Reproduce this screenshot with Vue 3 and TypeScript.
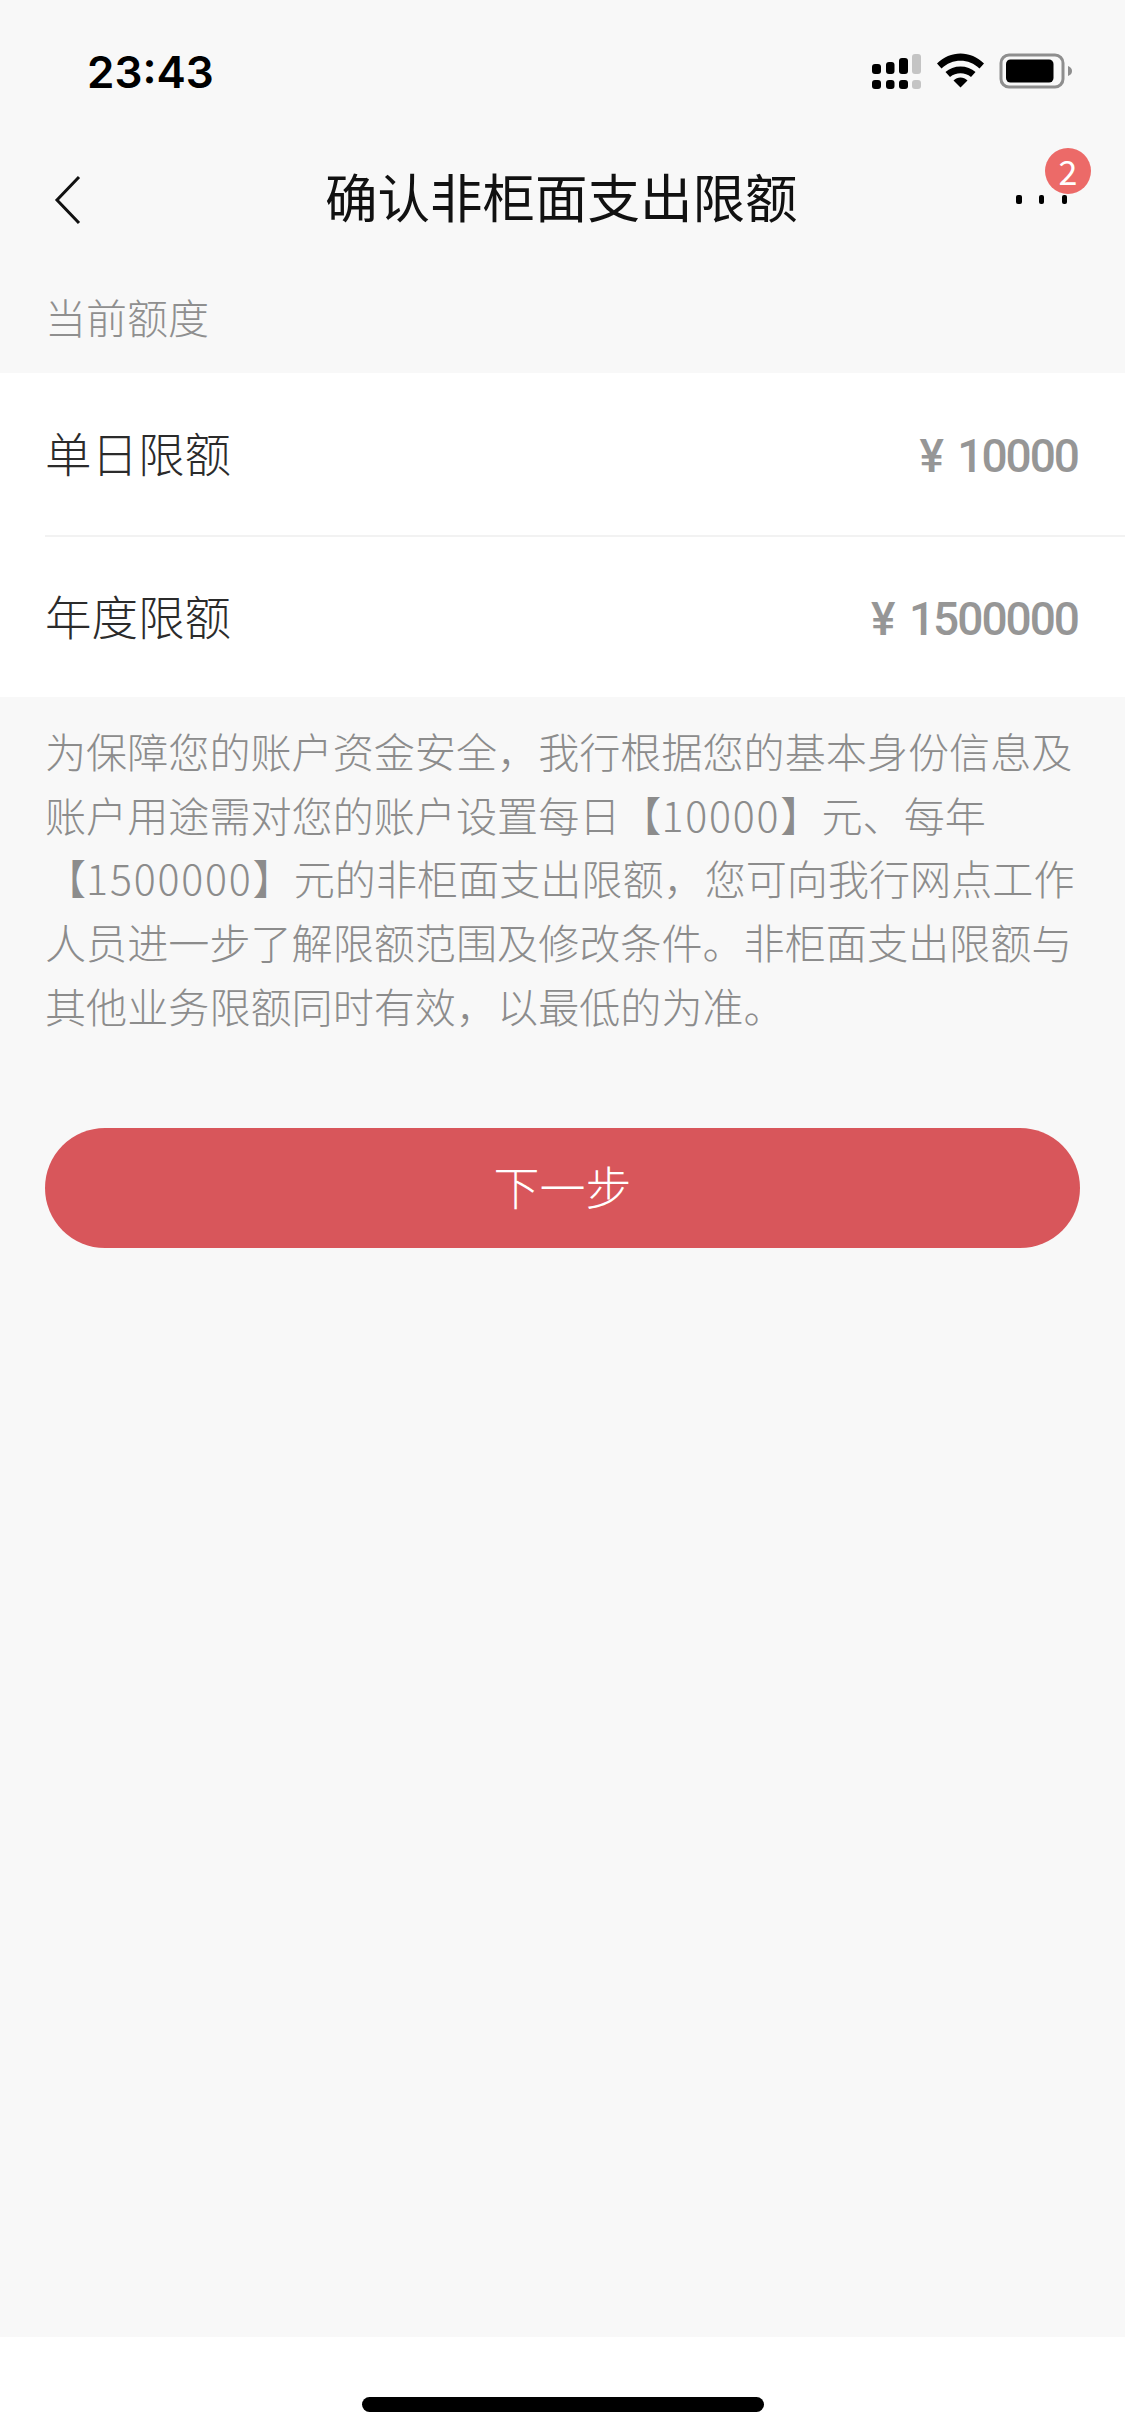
<script setup lang="ts">
interface LimitRow {
  label: string
  amount: string
}

interface NoticePart {
  text: string
  numeric: boolean
}

const rows: LimitRow[] = [
  { label: '单日限额', amount: '¥ 10000' },
  { label: '年度限额', amount: '¥ 1500000' },
]

const plain = (text: string): NoticePart => ({ text, numeric: false })
const digits = (text: string): NoticePart => ({ text, numeric: true })

const noticeLines: NoticePart[][] = [
  [plain('为保障您的账户资金安全，我行根据您的基本身份信息及')],
  [plain('账户用途需对您的账户设置每日【'), digits('10000'), plain('】元、每年')],
  [plain('【'), digits('1500000'), plain('】元的非柜面支出限额，您可向我行网点工作')],
  [plain('人员进一步了解限额范围及修改条件。非柜面支出限额与')],
  [plain('其他业务限额同时有效，以最低的为准。')],
]
</script>

<template>
  <div class="page">
    <main class="main">
      <header class="status">
        <span class="time">23:43</span>
        <svg class="status-icons" width="202" height="36" viewBox="870 53 202 36">
          <g fill="#000">
            <rect x="872" y="64" width="9" height="10" rx="3" />
            <rect x="886" y="62" width="8.500" height="12" rx="3" />
            <rect x="899" y="58" width="9" height="16" rx="3" />
            <rect x="872" y="80" width="9" height="9" rx="3" />
            <rect x="886" y="80" width="8.500" height="9" rx="3" />
            <rect x="899" y="80" width="9" height="9" rx="3" />
          </g>
          <g fill="#c4c4c4">
            <rect x="912" y="54" width="9" height="20" rx="3" />
            <rect x="912" y="80" width="9" height="9" rx="3" />
          </g>
          <path d="M937 63.500 C950 50 971 50 984 63.500 L979.500 68.500 C969 58 952 58 941.500 68.500 Z" fill="#000" />
          <path d="M945.500 72 C953 64.500 968 64.500 975.500 72 L971 77 C965 72 956 72 950 77 Z" fill="#000" />
          <path d="M953.500 80.500 C957.500 76.500 963.500 76.500 967.500 80.500 L960.500 87.500 Z" fill="#000" />
          <rect x="1001" y="55" width="62" height="32" rx="8" fill="none" stroke="#8e8e8e" stroke-width="3" />
          <rect x="1006" y="59.500" width="47.500" height="23" rx="4.500" fill="#000" />
          <path d="M1068 66 C1071 67 1072 69 1072 71 C1072 73 1071 75 1068 76 Z" fill="#8e8e8e" />
        </svg>
      </header>

      <nav class="nav">
        <svg class="back" width="28" height="50" viewBox="0 0 28 50">
          <path d="M25 2 L3 25 L25 48" fill="none" stroke="#111" stroke-width="3" />
        </svg>
        <h1 class="title">确认非柜面支出限额</h1>
        <div class="more">
          <i class="dot"></i><i class="dot"></i><i class="dot"></i>
          <span class="badge">2</span>
        </div>
      </nav>

      <div class="section-label">当前额度</div>

      <section class="card">
        <div v-for="row in rows" :key="row.label" class="row">
          <span class="row-label">{{ row.label }}</span>
          <span class="row-amount">{{ row.amount }}</span>
        </div>
      </section>

      <div class="notice">
        <p v-for="(line, i) in noticeLines" :key="i" class="notice-line">
          <span v-for="part in line" :key="part.text" :class="{ num: part.numeric }">{{ part.text }}</span>
        </p>
      </div>

      <button class="next" type="button">下一步</button>
    </main>

    <footer class="home">
      <span class="home-bar"></span>
    </footer>
  </div>
</template>

<style>
html,
body {
  margin: 0;
  background: #ffffff;
}
</style>

<style scoped>
.page {
  width: 1125px;
  height: 2435px;
  display: flex;
  flex-direction: column;
  background: #ffffff;
  font-family: 'Noto Sans CJK SC', 'Noto Sans', sans-serif;
  font-weight: 300;
  overflow: hidden;
}

.main {
  flex: 1;
  display: flex;
  flex-direction: column;
  background: #f8f8f8;
}

.status {
  height: 132px;
  box-sizing: border-box;
  padding: 53px 53px 0 87px;
  display: flex;
  justify-content: space-between;
  align-items: flex-start;
}

.time {
  font-family: Inter, 'Liberation Sans', sans-serif;
  font-size: 44px;
  font-weight: 600;
  line-height: 38px;
  color: #000;
}

.status-icons {
  display: block;
}

.nav {
  height: 132px;
  box-sizing: border-box;
  padding: 0 58px 0 54px;
  display: flex;
  align-items: center;
  justify-content: space-between;
  position: relative;
}

.back {
  display: block;
  margin-top: 3px;
}

.title {
  margin: 0;
  font-size: 52.500px;
  font-weight: 400;
  line-height: 70px;
  color: #111;
  position: absolute;
  left: 325px;
  top: 28px;
}

.more {
  position: relative;
  width: 51px;
  height: 9px;
  margin-top: 3px;
  display: flex;
  justify-content: space-between;
}

.dot {
  display: block;
  width: 5.500px;
  height: 9px;
  border-radius: 2px;
  background: #000;
}

.badge {
  position: absolute;
  left: 29px;
  top: -47px;
  width: 46px;
  height: 46px;
  border-radius: 50%;
  background: #ec6a68;
  color: #fff;
  font-size: 34px;
  font-weight: 400;
  line-height: 46px;
  text-align: center;
}

.section-label {
  height: 109px;
  box-sizing: border-box;
  padding: 21px 0 0 45px;
  font-size: 41px;
  line-height: 62px;
  color: #8f8f8f;
}

.card {
  background: #fff;
  padding-left: 45px;
}

.row {
  height: 162px;
  box-sizing: border-box;
  padding-right: 47px;
  display: flex;
  align-items: center;
  justify-content: space-between;
}

.row + .row {
  border-top: 2px solid #f2f2f2;
}

.row-label {
  font-size: 46.500px;
  line-height: 62px;
  padding-bottom: 4px;
  color: #2b2b2b;
}

.row-amount {
  font-family: Roboto, 'Liberation Sans', sans-serif;
  font-size: 46px;
  font-weight: 500;
  letter-spacing: -2px;
  word-spacing: 6px;
  padding-top: 3px;
  color: #969696;
}

.notice {
  padding: 22px 44px 0 45px;
}

.notice-line {
  margin: 0;
  font-size: 41.100px;
  line-height: 63.700px;
  white-space: nowrap;
  color: #8c8c8c;
}

.num {
  letter-spacing: 1.800px;
}

.next {
  display: block;
  margin: 90px 45px 0;
  width: 1035px;
  height: 120px;
  border: 0;
  border-radius: 60px;
  background: #d8565b;
  color: #fff;
  font-family: inherit;
  font-weight: 300;
  font-size: 46px;
  text-align: center;
  padding: 0 0 5px;
}

.home {
  height: 98px;
  flex-shrink: 0;
  background: #fff;
  display: flex;
  justify-content: center;
  padding-top: 60px;
  box-sizing: border-box;
}

.home-bar {
  display: block;
  width: 402px;
  height: 15px;
  border-radius: 8px;
  background: #000;
}
</style>
